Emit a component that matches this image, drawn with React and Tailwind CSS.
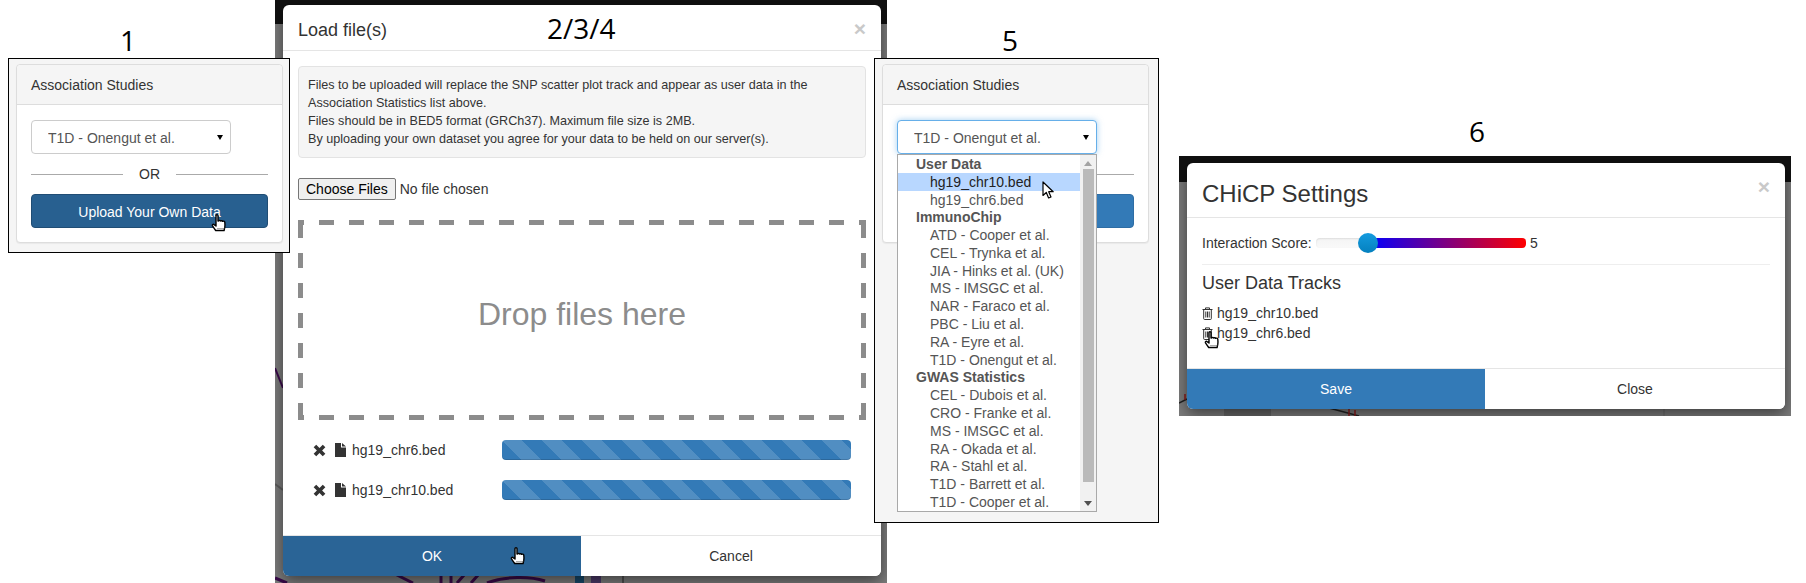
import React from "react";

const uploadedFiles = ["hg19_chr6.bed", "hg19_chr10.bed"];

const optionGroups = [
  { label: "User Data", options: ["hg19_chr10.bed", "hg19_chr6.bed"] },
  {
    label: "ImmunoChip",
    options: [
      "ATD - Cooper et al.",
      "CEL - Trynka et al.",
      "JIA - Hinks et al. (UK)",
      "MS - IMSGC et al.",
      "NAR - Faraco et al.",
      "PBC - Liu et al.",
      "RA - Eyre et al.",
      "T1D - Onengut et al.",
    ],
  },
  {
    label: "GWAS Statistics",
    options: [
      "CEL - Dubois et al.",
      "CRO - Franke et al.",
      "MS - IMSGC et al.",
      "RA - Okada et al.",
      "RA - Stahl et al.",
      "T1D - Barrett et al.",
      "T1D - Cooper et al.",
    ],
  },
];

const HandCursor = ({ className }) => (
  <svg viewBox="0 0 15 18" className={`absolute h-[18px] w-4 ${className}`}>
    <path
      d="M4.500 1.600c0-1.200 2-1.200 2 0V7h.6c.4-.7 1.700-.7 2 .1.500-.6 1.700-.5 2 .3.600-.5 2-.3 2.200.8.200 1.500.200 3.400 0 5l-.7 3.300H4.200C3 14.800 2 13.300 1 11.800c-.6-1 .6-2 1.600-1.200l1.900 1.400V1.600z"
      fill="#fff"
      stroke="#000"
      strokeWidth="1.400"
      strokeLinejoin="round"
    />
    <path d="M6 14.500h1M8 14.500h1M10 14.500h1M12 14.500h.8" stroke="#555" strokeWidth="1" />
  </svg>
);

const ArrowCursor = ({ className }) => (
  <svg viewBox="0 0 13 19" className={`absolute h-[19px] w-[13px] ${className}`}>
    <path
      d="M1 1v13.500l3.300-3 2.300 5.500 2.400-1-2.300-5.300h4.500L1 1z"
      fill="#fff"
      stroke="#000"
      strokeWidth="1.200"
      strokeLinejoin="round"
    />
  </svg>
);

const RemoveIcon = () => (
  <svg viewBox="0 0 12 12" className="h-[13px] w-[13px] fill-[#333]">
    <path d="M3 .6 6 3.600 9 .6l2.400 2.400-3 3 3 3L9 11.400l-3-3-3 3L.6 9l3-3-3-3L3 .6z" />
  </svg>
);

const FileIcon = () => (
  <svg viewBox="0 0 11 14" className="h-[14px] w-[11px] fill-[#333]">
    <path d="M0 0h6v4.500h5V14H0V0zm7 0 4 3.500H7V0z" />
  </svg>
);

const TrashIcon = () => (
  <svg viewBox="0 0 11 13" className="h-[13px] w-[11px] fill-none stroke-[#333]">
    <path d="M.5 2.500h10M3.500 2.500V.9h4v1.600M1.700 2.500v9.200c0 .5.300.8.8.8h6c.5 0 .8-.3.8-.8V2.500M3.800 4.500v6M5.500 4.500v6M7.200 4.500v6" strokeWidth="1" />
  </svg>
);

// the montage's step numbers
const StepLabel = ({ className, children }) => (
  <div className={`absolute z-30 text-[28px] leading-[34px] text-black [font-family:'Open_Sans',sans-serif] ${className}`}>
    {children}
  </div>
);

const ModalClose = ({ className }) => (
  <span className={`absolute text-[21px] font-bold leading-none text-[#c9c9c9] ${className}`}>×</span>
);

const StudySelect = ({ focused }) => (
  <div className="relative">
    <select
      defaultValue="t1d"
      className={`block h-[34px] w-[200px] appearance-none rounded border bg-white pb-px pl-4 pr-3 pt-0.5 text-sm text-[#555] ${
        focused ? "border-[#66afe9] shadow-[0_0_6px_rgba(102,175,233,.6)]" : "border-[#ccc]"
      }`}
    >
      <option value="t1d">T1D - Onengut et al.</option>
    </select>
    <span className="absolute right-2 top-[15px] h-0 w-0 border-x-[3px] border-t-[5px] border-x-transparent border-t-black" />
  </div>
);

const OpenOptions = () => (
  <div className="absolute left-0 top-[34px] z-10 flex h-[358px] w-[200px] overflow-hidden border border-[#a9a9a9] bg-white text-sm text-[#555]">
    <div className="flex-1">
      {optionGroups.map((group) => (
        <div key={group.label}>
          <div className="flex h-[17.800px] items-center pl-[18px] font-bold">{group.label}</div>
          {group.options.map((option) => (
            <div
              key={group.label + option}
              className={`flex h-[17.800px] items-center pl-8 ${
                option === "hg19_chr10.bed" ? "bg-[#b8d7ff] text-[#222]" : ""
              }`}
            >
              {option}
            </div>
          ))}
        </div>
      ))}
    </div>
    <div className="flex w-[16px] flex-col items-center bg-[#f1f1f1]">
      <div className="mt-[6px] h-0 w-0 border-x-4 border-b-[5px] border-x-transparent border-b-[#a3a3a3]" />
      <div className="mt-[3px] h-[313px] w-[11px] bg-[#bababa]" />
      <div className="mt-[19px] h-0 w-0 border-x-4 border-t-[5px] border-x-transparent border-t-[#505050]" />
    </div>
  </div>
);

const AssociationPanel = ({ className, open, hover }) => (
  <div className={`absolute z-20 border border-black bg-[#f5f5f5] pl-[7px] pt-[5px] ${className}`}>
    <div className="w-[267px] rounded border border-[#ddd] bg-white shadow-[0_1px_1px_rgba(0,0,0,.05)]">
      <div className="flex h-10 items-center rounded-t border-b border-[#ddd] bg-[#f5f5f5] px-[14px] text-sm text-[#333]">
        Association Studies
      </div>
      <div className="p-[14px] pt-[15px]">
        <div className="relative w-[200px]">
          <StudySelect focused={open} />
          {open && <OpenOptions />}
        </div>
        {/* with the list open, the OR row and the button label sit behind it */}
        <div className="flex h-10 items-center gap-4 text-sm text-[#333]">
          <div className="h-px flex-1 bg-[#aaa]" />
          {!open && "OR"}
          {!open && <div className="h-px flex-1 bg-[#aaa]" />}
        </div>
        <button
          className={`block h-[34px] w-full rounded border pt-px text-sm text-white ${
            hover ? "border-[#204d74] bg-[#286090]" : "border-[#2e6da4] bg-[#337ab7]"
          }`}
        >
          {!open && "Upload Your Own Data"}
        </button>
      </div>
    </div>
  </div>
);

const DashedBox = ({ children }) => (
  <div className="relative mt-5 flex h-[200px] items-center justify-center pb-3 text-[32px] text-[#8c8c8c]">
    <svg viewBox="0 0 568 200" className="absolute inset-0 h-full w-full fill-none stroke-[#8c8c8c]">
      <path d="M0 2.500H568M0 197.500H568" strokeWidth="5" strokeDasharray="15 15" strokeDashoffset="9" />
      <path d="M2.500 3V200M565.500 3V200" strokeWidth="5" strokeDasharray="15 15" />
    </svg>
    {children}
  </div>
);

const LoadModal = () => (
  <div className="absolute left-[275px] top-0 z-0 h-[583px] w-[612px] overflow-hidden bg-[#7c7c7c]">
    <div className="absolute inset-x-0 top-0 h-6 bg-[#111]" />
    <svg viewBox="0 0 612 583" className="absolute inset-0 h-full w-full fill-none">
      <path d="M0 368 8 388" stroke="#3a0a4a" strokeWidth="2" />
      <path d="M0 484 8 490" stroke="#5e5e5e" strokeWidth="2" />
      <path d="M0 578 12 583" stroke="#3a0a4a" strokeWidth="3" />
      <path d="M120 574 138 583M166 574V583M176 574V583M190 574 182 583M204 574 196 583" stroke="#3a0a4a" strokeWidth="3" />
      <path d="M212 583C230 576 255 576 270 581" stroke="#3a0a4a" strokeWidth="3" />
      <path d="M300 576h9v7h-9z" fill="#17496b" />
      <path d="M316 576h10v7h-10z" fill="#4c3a6a" />
      <path d="M348 574V583" stroke="#222" />
    </svg>
    <div className="relative ml-2 mt-[5px] flex h-[571px] w-[598px] flex-col overflow-hidden rounded-md bg-white text-[#333] shadow-[0_5px_15px_rgba(0,0,0,.5)]">
      <div className="relative flex h-[46px] shrink-0 items-center border-b border-[#e5e5e5] px-[15px] pt-[5px] text-lg">
        Load file(s)
        <ModalClose className="right-[15px] top-[13px]" />
      </div>
      <div className="flex-1 px-[15px] pt-[15px]">
        <div className="h-[92px] rounded border border-[#e3e3e3] bg-[#f5f5f5] px-[9px] py-[9px] text-[12.600px] leading-[18px]">
          Files to be uploaded will replace the SNP scatter plot track and appear as user data in the
          <br />
          Association Statistics list above.
          <br />
          Files should be in BED5 format (GRCh37). Maximum file size is 2MB.
          <br />
          By uploading your own dataset you agree for your data to be held on our server(s).
        </div>
        <input
          type="file"
          multiple
          className="mt-5 block h-[22px] w-[300px] text-sm file:mr-1 file:h-[22px] file:rounded-[2px] file:border file:border-[#767676] file:bg-[#efefef] file:px-[7px] file:text-black"
        />
        <DashedBox>Drop files here</DashedBox>
        <div className="mt-5 flex flex-col gap-5">
          {uploadedFiles.map((name) => (
            <div key={name} className="flex h-5 items-center pl-[15px] text-sm">
              <RemoveIcon />
              <span className="ml-[9px]">
                <FileIcon />
              </span>
              <span className="ml-[6px] w-[150px]">{name}</span>
              <div className="h-5 w-[349px] rounded bg-[#337ab7] bg-[linear-gradient(45deg,rgba(255,255,255,.15)_25%,transparent_25%,transparent_50%,rgba(255,255,255,.15)_50%,rgba(255,255,255,.15)_75%,transparent_75%,transparent)] bg-[length:40px_40px] shadow-[inset_0_-1px_0_rgba(0,0,0,.15)]" />
            </div>
          ))}
        </div>
      </div>
      <div className="flex h-[41px] shrink-0 border-t border-[#e5e5e5] text-sm">
        <button className="w-[298px] bg-[#2a6496] text-white">OK</button>
        <button className="flex-1 bg-white text-[#333]">Cancel</button>
      </div>
    </div>
  </div>
);

const SettingsModal = () => (
  <div className="absolute left-[1179px] top-[156px] z-0 h-[260px] w-[612px] overflow-hidden bg-[#7c7c7c]">
    <div className="absolute inset-x-0 top-0 h-[26px] bg-[#111]" />
    <svg viewBox="0 0 612 260" className="absolute inset-0 h-full w-full fill-none">
      <path d="M0 247 8 243M150 252 180 260" stroke="#222" strokeWidth="1.500" />
      <path d="M6 238v6M170 252v8M176 254v6" stroke="#8b1a1a" strokeWidth="1.500" />
      <rect x="45" y="253" width="47" height="7" fill="#666" />
      <path d="M485 253V260" stroke="#666" />
    </svg>
    <div className="relative ml-2 mt-[7px] flex h-[246px] w-[598px] flex-col overflow-hidden rounded-md bg-white text-[#333] shadow-[0_5px_15px_rgba(0,0,0,.5)]">
      <div className="relative flex h-[55px] shrink-0 items-center border-b border-[#e5e5e5] px-[15px] pt-2 text-2xl">
        CHiCP Settings
        <ModalClose className="right-[15px] top-[13px]" />
      </div>
      <div className="flex-1 px-[15px] text-sm">
        <div className="flex h-[46px] items-center pt-[3px]">
          <span className="w-[114px]">Interaction Score:</span>
          <div className="relative h-[10px] w-[210px] rounded bg-[linear-gradient(#f5f5f5,#f9f9f9)] shadow-[inset_0_1px_2px_rgba(0,0,0,.1)]">
            <div className="absolute inset-y-0 left-[52px] right-0 rounded-r bg-[linear-gradient(to_right,#0000ff,#ff0000)]" />
            <div className="absolute left-[42px] top-[-5px] h-5 w-5 rounded-full bg-[linear-gradient(#149bdf,#0480be)]" />
          </div>
          <span className="ml-1">5</span>
        </div>
        <div className="h-px bg-[#eee]" />
        <div className="mt-2 text-lg leading-5">User Data Tracks</div>
        <div className="mt-[10px] flex flex-col">
          {["hg19_chr10.bed", "hg19_chr6.bed"].map((name) => (
            <div key={name} className="flex h-5 items-center gap-1">
              <TrashIcon />
              {name}
            </div>
          ))}
        </div>
      </div>
      <div className="flex h-[41px] shrink-0 border-t border-[#e5e5e5] text-sm">
        <button className="w-[298px] bg-[#337ab7] text-white">Save</button>
        <button className="flex-1 bg-white text-[#333]">Close</button>
      </div>
    </div>
  </div>
);

export default function App() {
  return (
    <div className="relative h-[583px] w-[1806px] overflow-hidden bg-white [font-family:'Liberation_Sans',sans-serif]">
      <LoadModal />
      <SettingsModal />

      <AssociationPanel className="left-2 top-[58px] h-[195px] w-[282px]" hover />
      <AssociationPanel className="left-[874px] top-[58px] h-[465px] w-[285px]" open />

      <StepLabel className="left-[120px] top-[23px]">1</StepLabel>
      <StepLabel className="left-[547px] top-[11px]">2/3/4</StepLabel>
      <StepLabel className="left-[1002px] top-[23px]">5</StepLabel>
      <StepLabel className="left-[1469px] top-[114px]">6</StepLabel>

      <HandCursor className="left-[211px] top-[214px] z-30" />
      <HandCursor className="left-[510px] top-[547px] z-30" />
      <ArrowCursor className="left-[1042px] top-[181px] z-30" />
      <HandCursor className="left-[1204px] top-[331px] z-30" />
    </div>
  );
}
